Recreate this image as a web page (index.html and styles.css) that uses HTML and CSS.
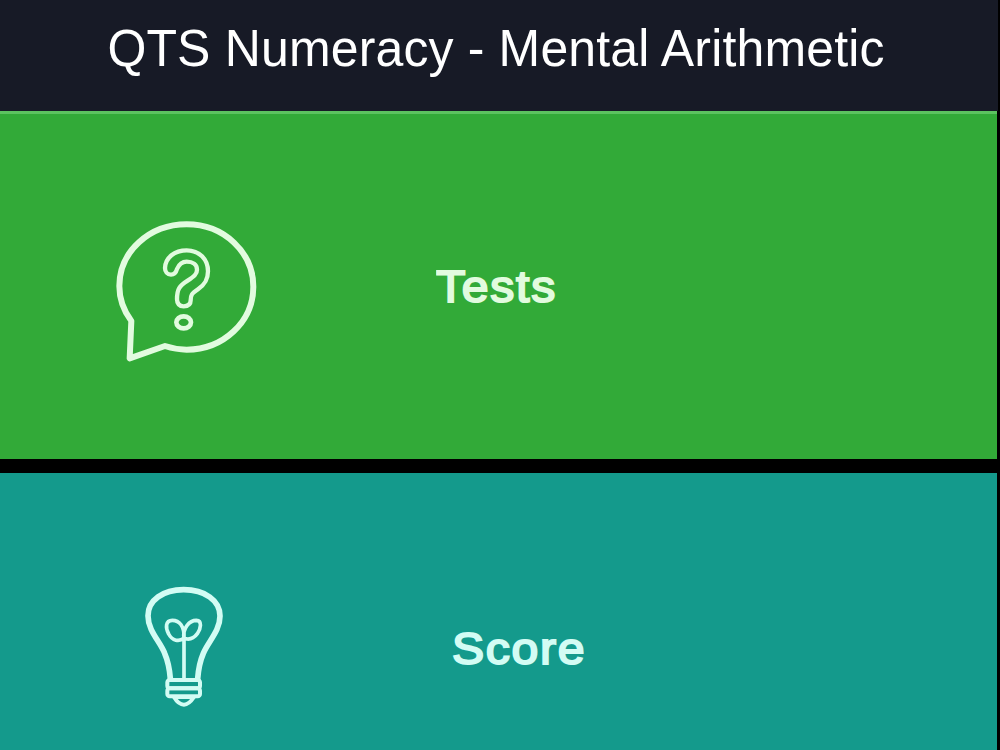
FILE: index.html
```html
<!DOCTYPE html>
<html lang="en">
<head>
  <meta charset="UTF-8" />
  <title>QTS Numeracy - Mental Arithmetic</title>
  <link rel="stylesheet" href="styles.css">
</head>
<body>
  <header class="header">
    <h1>QTS Numeracy - Mental Arithmetic</h1>
  </header>

  <main class="menu">
    <!-- Tests -->
    <section class="tile tests">
      <div class="icon">
        <svg class="bubble" viewBox="0 0 510 510">
          <path stroke-width="18" d="M89 460 L94 348 C70 316 58 280 58 243 C58 140 148 58 260 58 C372 58 460 142 460 245 C460 350 370 434 260 434 C238 434 216 430 195 423 Z" />
          <path stroke-width="13" d="M213 209 C202 209 195 200 195 189 C196 158 224 136 260 136 C298 136 324 163 324 199 C324 225 314 239 294 253 C274 267 272 270 272 286 C272 299 263 304 251 304 C238 304 231 296 231 283 C231 252 238 243 263 227 C283 214 291 207 291 194 C291 179 278 170 260 170 C245 170 237 178 231 192 C228 203 223 209 213 209 Z" />
          <ellipse stroke-width="14" cx="251" cy="352" rx="22" ry="18" />
        </svg>
      </div>
      <h2>Tests</h2>
    </section>

    <!-- Score -->
    <section class="tile score">
      <div class="icon">
        <svg class="bulb" viewBox="0 0 330 435">
          <path stroke-width="17" d="M121 311 C119 284 113 256 104 235 C90 199 54 168 54 122 C54 76 99 44 161 44 C224 44 270 76 270 123 C270 168 235 199 220 235 C211 256 205 284 203 311" />
          <path stroke-width="11" d="M162 312 V160 M162 190 C164 153 148 136 127 136 C106 136 106 159 116 177 C127 198 147 201 162 190 C157 160 178 136 199 136 C217 137 213 160 202 176 C191 191 177 195 162 190" />
          <rect stroke-width="12" x="112" y="315" width="98" height="25" rx="7" />
          <rect stroke-width="12" x="112" y="340" width="98" height="24" rx="7" />
          <path stroke-width="12" d="M132 366 C139 378 149 389 162 389 C175 389 184 378 192 366 Z" />
        </svg>
      </div>
      <h2>Score</h2>
    </section>
  </main>
</body>
</html>
```

FILE: styles.css
```css
* { margin: 0; padding: 0; box-sizing: border-box; }

body {
  display: flex;
  flex-direction: column;
  height: 100vh;
  font-family: "Liberation Sans", Arial, sans-serif;
  background: #000;
}

.header {
  height: 111px;
  margin-right: 2px;
  padding: 21px 6px 0 0;
  text-align: center;
  background: #171a26;
}

h1 {
  font-size: 50px;
  line-height: 57px;
  font-weight: normal;
  letter-spacing: 0.15px;
  color: #fff;
  transform: scaleY(1.03);
}

.menu {
  flex: 1;
  display: flex;
  flex-direction: column;
  gap: 14px;
  margin-right: 3px;
}

.tile {
  display: flex;
  align-items: center;
}

.tests {
  height: 348px;
  color: #e2fbdf;
  background: #32aa38;
  border-top: 3px solid #5cc360;
}

.score {
  flex: 1;
  padding-top: 72px;
  color: #d3fcf4;
  background: #149a8c;
}

.icon {
  display: flex;
  justify-content: center;
  width: 370px;
}

.icon svg {
  fill: none;
  stroke: currentColor;
  stroke-linecap: round;
  stroke-linejoin: round;
}

.bubble {
  width: 170px;
  height: 170px;
  margin-top: 6px;
}

.bulb {
  width: 110px;
  height: 145px;
}

h2 {
  margin-left: 66px;
  font-size: 45px;
  font-weight: normal;
  letter-spacing: 1.6px;
  -webkit-text-stroke: 2px currentColor;
  transform: scaleX(1.07);
  transform-origin: left;
}

.score h2 {
  margin: 3px 0 0 82px;
}
```
